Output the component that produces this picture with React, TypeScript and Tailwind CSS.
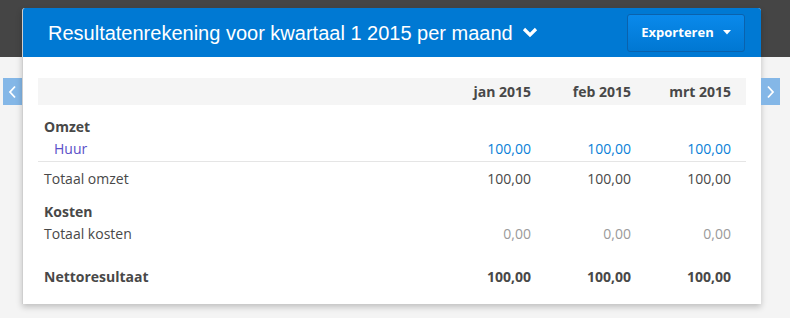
import React from 'react'

const MONTHS = ['jan 2015', 'feb 2015', 'mrt 2015']

function Cell({ children, className = '' }: { children: React.ReactNode; className?: string }) {
  return <div className={'w-[100px] shrink-0 pr-[15px] text-right ' + className}>{children}</div>
}

function Arrow({ dir }: { dir: 'left' | 'right' }) {
  return (
    <button
      type="button"
      className="mt-[78px] flex h-[27px] w-[19px] shrink-0 items-center justify-center bg-[#84b7e7]"
    >
      <svg width="9" height="14" viewBox="0 0 9 14" fill="none">
        <polyline
          points={dir === 'left' ? '7,1.5 2,7 7,12.5' : '2,1.5 7,7 2,12.5'}
          stroke="#fff"
          strokeWidth="1.8"
        />
      </svg>
    </button>
  )
}

export default function App() {
  return (
    <div
      className="flex h-[318px] w-[790px] items-start bg-[linear-gradient(to_bottom,#454545_57px,#f4f4f4_57px)] pl-[3px] text-[14px] text-[#484848]"
      style={{ fontFamily: '"Open Sans", "Liberation Sans", sans-serif' }}
    >
      <Arrow dir="left" />
      <div className="mt-[8px] w-[739px] shrink-0 overflow-hidden rounded-t-[3px] border-l border-[#cfcfcf] bg-white shadow-[0_3px_6px_rgba(0,0,0,0.22)]">
        <div className="flex h-[49px] items-center justify-between bg-[#0079d3] pl-[25px] pr-[16px]">
          <div
            className="flex items-center gap-[9px] text-[20px] text-white"
            style={{ fontFamily: '"Liberation Sans", Arial, sans-serif' }}
          >
            <span>Resultatenrekening voor kwartaal 1 2015 per maand</span>
            <svg width="16" height="11" viewBox="0 0 16 11" fill="none">
              <polyline points="2,2 8,8 14,2" stroke="#fff" strokeWidth="3.2" />
            </svg>
          </div>
          <button
            type="button"
            className="flex h-[38px] w-[118px] items-center justify-center gap-[9px] rounded-[3px] border border-[#0a62ad] bg-[linear-gradient(to_bottom,#0a89eb,#0077d2)] text-[13px] font-bold text-white"
          >
            Exporteren
            <svg width="8" height="5" viewBox="0 0 8 5">
              <polygon points="0,0 8,0 4,4.5" fill="#fff" />
            </svg>
          </button>
        </div>

        <div className="px-[15px] pb-[17px] pt-[21px]">
          <div className="flex h-[27px] items-center bg-[#f5f5f5] font-bold">
            <div className="flex-1" />
            {MONTHS.map(m => (
              <Cell key={m}>{m}</Cell>
            ))}
          </div>

          <div className="mt-[10px] flex h-[22px] items-center font-bold">
            <div className="flex-1 pl-[6px]">Omzet</div>
          </div>
          <div className="flex h-[25px] items-center border-b border-[#e5e5e5] pb-[1px]">
            <div className="flex-1 pl-[16px] text-[#5a4fc8]">Huur</div>
            {MONTHS.map(m => (
              <Cell key={m} className="text-[#0a7fd8]">100,00</Cell>
            ))}
          </div>
          <div className="mt-[5px] flex h-[22px] items-center">
            <div className="flex-1 pl-[6px]">Totaal omzet</div>
            {MONTHS.map(m => (
              <Cell key={m}>100,00</Cell>
            ))}
          </div>

          <div className="mt-[11px] flex h-[22px] items-center font-bold">
            <div className="flex-1 pl-[6px]">Kosten</div>
          </div>
          <div className="flex h-[22px] items-center">
            <div className="flex-1 pl-[6px]">Totaal kosten</div>
            {MONTHS.map(m => (
              <Cell key={m} className="text-[#9a9a9a]">0,00</Cell>
            ))}
          </div>

          <div className="mt-[21px] flex h-[22px] items-center font-bold">
            <div className="flex-1 pl-[6px]">Nettoresultaat</div>
            {MONTHS.map(m => (
              <Cell key={m}>100,00</Cell>
            ))}
          </div>
        </div>
      </div>
      <Arrow dir="right" />
    </div>
  )
}
